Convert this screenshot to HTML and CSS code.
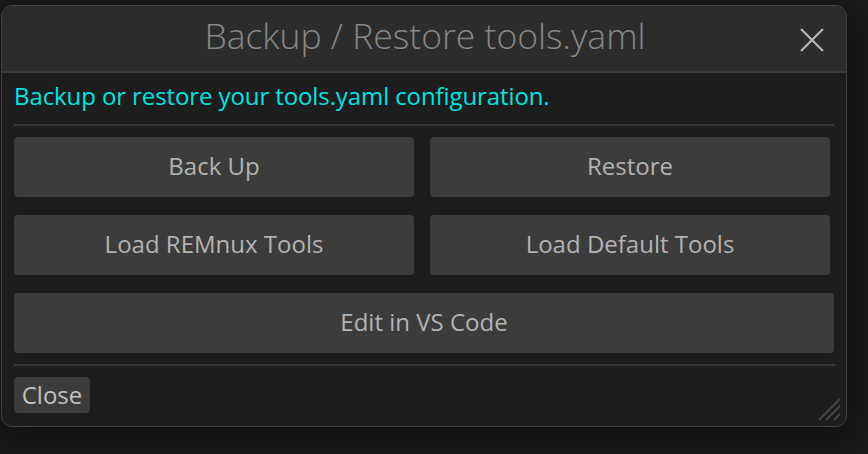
FILE: index.html
```html
<!DOCTYPE html>
<html>
<head>
<meta charset="utf-8">
<link rel="stylesheet" href="styles.css">
</head>
<body>
<div class="window">
  <div class="titlebar">
    <div class="title">Backup / Restore tools.yaml</div>
    <button class="close-x" aria-label="Close">
      <svg width="24" height="24" viewBox="0 0 24 24"><path d="M1 1 L23 23 M23 1 L1 23" stroke="#bdbdbd" stroke-width="2" fill="none"/></svg>
    </button>
  </div>
  <div class="content">
    <div class="subtitle">Backup or restore your tools.yaml configuration.</div>
    <div class="sep"></div>
    <div class="grid">
      <button class="btn half">Back Up</button>
      <button class="btn half">Restore</button>
      <button class="btn half">Load REMnux Tools</button>
      <button class="btn half">Load Default Tools</button>
      <button class="btn full">Edit in VS Code</button>
    </div>
    <div class="sep sep2"></div>
    <div class="footer">
      <button class="btn small">Close</button>
    </div>
  </div>
  <svg class="grip" width="24" height="24" viewBox="0 0 24 24"><path d="M2 23 L23 2 M9 23 L23 9 M17 23 L23 17" stroke="#474747" stroke-width="2" fill="none"/></svg>
</div>
</body>
</html>
```

FILE: styles.css
```css
html, body {
  margin: 0;
  padding: 0;
}
body {
  width: 868px;
  height: 454px;
  background: #1b1b1b;
  overflow: hidden;
  font-family: "Open Sans", "Noto Sans", sans-serif;
}
.window {
  position: relative;
  margin: 5px 0 0 1px;
  width: 844px;
  height: 420px;
  border: 1px solid #424242;
  border-radius: 11px;
  background: #1d1d1d;
  box-shadow: 2px 10px 30px 8px rgba(0,0,0,0.35);
  overflow: hidden;
  display: flex;
  flex-direction: column;
}
.titlebar {
  height: 65px;
  flex: none;
  background: #2c2c2c;
  border-bottom: 2px solid #3a3a3a;
  display: flex;
  align-items: center;
  justify-content: center;
  position: relative;
}
.title {
  color: #878787;
  font-size: 35.5px;
  font-weight: 300;
  margin-left: 2px;
  margin-top: -7px;
}
.close-x {
  position: absolute;
  right: 22px;
  top: 22px;
  width: 24px;
  height: 24px;
  padding: 0;
  border: 0;
  background: none;
}
.close-x svg { display: block; }
.content {
  padding: 0 12px 0 12px;
  display: flex;
  flex-direction: column;
}
.subtitle {
  color: #00e2e2;
  font-size: 24px;
  height: 51px;
  line-height: 46px;
  letter-spacing: -0.1px;
}
.sep {
  height: 2px;
  background: #393939;
}
.grid {
  margin-top: 11px;
  display: grid;
  grid-template-columns: 400px 400px;
  column-gap: 16px;
  row-gap: 18px;
}
.btn {
  border: 0;
  border-radius: 4px;
  background: #3c3c3c;
  color: #b3b3b3;
  font-family: inherit;
  font-size: 24px;
  padding: 0 0 4px 0;
}
.half { height: 60px; }
.full { grid-column: 1 / 3; height: 60px; width: 820px; }
.sep2 { margin-top: 11px; width: 821px; }
.footer {
  margin-top: 11px;
  display: flex;
}
.small {
  width: 76px;
  height: 36px;
  padding-bottom: 2px;
  color: #c2c2c2;
}
.grip {
  position: absolute;
  right: 5px;
  bottom: 5px;
}
```
